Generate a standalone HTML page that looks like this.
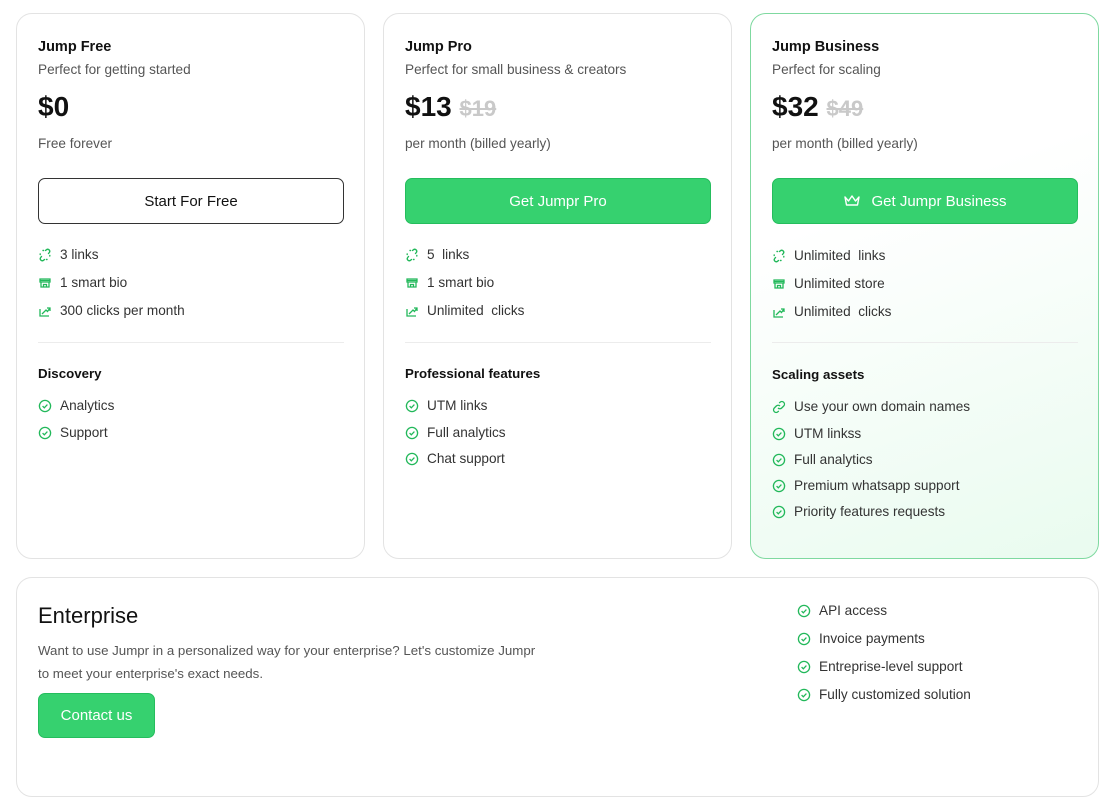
<!DOCTYPE html>
<html><head><meta charset="utf-8"><style>
*{box-sizing:border-box;margin:0;padding:0}
body{width:1108px;height:764px;background:#fff;font-family:"Liberation Sans",sans-serif;color:#1a1a1a;position:relative;overflow:hidden}
.card{position:absolute;top:13px;width:349px;height:546px;border:1px solid #e3e3e3;border-radius:16px;background:#fff}
.card.biz{border-color:#7fd9a0;background:linear-gradient(160deg,#fff 35%,#e9fbef 100%)}
.abs{position:absolute;left:21px;white-space:nowrap}
.t{top:25px;font-size:14.5px;font-weight:bold;color:#111}
.s{top:48px;font-size:13.6px;color:#555}
.p{top:77px;font-size:28px;font-weight:bold;color:#111}
.p del{color:#c9c9c9;font-size:22px;font-weight:bold}
.f{top:122px;font-size:13.6px;color:#555}
.btn{position:absolute;left:21px;top:164px;width:306px;height:46px;border-radius:7px;font-size:15px;display:flex;align-items:center;justify-content:center}
.b1{border:1px solid #333;color:#111;background:#fff}
.bg{background:#36d16f;border:1px solid #25bd5d;color:#fff}
.li{position:absolute;left:21px;font-size:13.6px;color:#333;display:flex;align-items:center;white-space:nowrap}
.li svg{margin-right:8px}
.hr{position:absolute;left:21px;width:306px;top:328px;border-top:1px solid #ececec}
.h{top:352px;font-size:13.3px;font-weight:bold;color:#111}
.ent{position:absolute;left:16px;top:577px;width:1083px;height:220px;border:1px solid #e3e3e3;border-radius:16px}
</style></head><body>
<svg width="0" height="0" style="position:absolute"><defs>
<symbol id="chk" viewBox="0 0 14 14"><circle cx="7" cy="7" r="5.6" fill="none" stroke="#22b85a" stroke-width="1.3"/><path d="M4.6 7.1l1.7 1.7 3.1-3.2" fill="none" stroke="#22b85a" stroke-width="1.3"/></symbol>
<symbol id="lnk" viewBox="0 0 14 14"><g fill="none" stroke="#22b85a" stroke-width="1.4" stroke-linecap="round"><path d="M7.5 2.5l1-.8a2 2 0 012.8 2.8l-.8 1"/><path d="M6.5 11.5l-1 .8a2 2 0 01-2.8-2.8l.8-1"/><path d="M2.2 6.5v-.5M11.8 7.5v.5M5 2.5h.5M9 11.5h-.5"/></g></symbol>
<symbol id="st" viewBox="0 0 14 14"><path d="M2 3h10v3H2zM3 6v5h8V6M2 4.5h10M5.5 11V8.5h3V11" fill="none" stroke="#22b85a" stroke-width="1.3"/></symbol>
<symbol id="tr" viewBox="0 0 14 14"><path d="M2 5v7h9M4 10l4-4 1.5 1.5L12 4M9 4h3v3" fill="none" stroke="#22b85a" stroke-width="1.3"/></symbol>
<symbol id="cl" viewBox="0 0 14 14"><path d="M6 8a2.6 2.6 0 003.7 0l2-2a2.6 2.6 0 00-3.7-3.7l-.8.8M8 6a2.6 2.6 0 00-3.7 0l-2 2a2.6 2.6 0 003.7 3.7l.8-.8" fill="none" stroke="#22b85a" stroke-width="1.3"/></symbol>
</defs></svg>

<div class="card" style="left:16px">
<div class="abs t">Jump Free</div><div class="abs s">Perfect for getting started</div>
<div class="abs p">$0</div><div class="abs f">Free forever</div>
<div class="btn b1">Start For Free</div>
<div class="li" style="top:233px"><svg width="14" height="14"><use href="#lnk"/></svg>3 links</div>
<div class="li" style="top:261px"><svg width="14" height="14"><use href="#st"/></svg>1 smart bio</div>
<div class="li" style="top:289px"><svg width="14" height="14"><use href="#tr"/></svg>300 clicks per month</div>
<div class="hr"></div><div class="abs h">Discovery</div>
<div class="li" style="top:384px"><svg width="14" height="14"><use href="#chk"/></svg>Analytics</div>
<div class="li" style="top:411px"><svg width="14" height="14"><use href="#chk"/></svg>Support</div>
</div>

<div class="card" style="left:383px">
<div class="abs t">Jump Pro</div><div class="abs s">Perfect for small business &amp; creators</div>
<div class="abs p">$13 <del>$19</del></div><div class="abs f">per month (billed yearly)</div>
<div class="btn bg">Get Jumpr Pro</div>
<div class="li" style="top:233px"><svg width="14" height="14"><use href="#lnk"/></svg>5&nbsp; links</div>
<div class="li" style="top:261px"><svg width="14" height="14"><use href="#st"/></svg>1 smart bio</div>
<div class="li" style="top:289px"><svg width="14" height="14"><use href="#tr"/></svg>Unlimited&nbsp; clicks</div>
<div class="hr"></div><div class="abs h">Professional features</div>
<div class="li" style="top:384px"><svg width="14" height="14"><use href="#chk"/></svg>UTM links</div>
<div class="li" style="top:411px"><svg width="14" height="14"><use href="#chk"/></svg>Full analytics</div>
<div class="li" style="top:437px"><svg width="14" height="14"><use href="#chk"/></svg>Chat support</div>
</div>

<div class="card biz" style="left:750px">
<div class="abs t">Jump Business</div><div class="abs s">Perfect for scaling</div>
<div class="abs p">$32 <del>$49</del></div><div class="abs f">per month (billed yearly)</div>
<div class="btn bg"><svg width="18" height="14" viewBox="0 0 18 14" style="margin-right:10px"><path d="M2 3l3.5 4L9 2l3.5 5L16 3l-1.5 8h-11z" fill="none" stroke="#fff" stroke-width="1.4" stroke-linejoin="round"/></svg>Get Jumpr Business</div>
<div class="li" style="top:234px"><svg width="14" height="14"><use href="#lnk"/></svg>Unlimited&nbsp; links</div>
<div class="li" style="top:262px"><svg width="14" height="14"><use href="#st"/></svg>Unlimited store</div>
<div class="li" style="top:290px"><svg width="14" height="14"><use href="#tr"/></svg>Unlimited&nbsp; clicks</div>
<div class="hr"></div><div class="abs h" style="top:353px">Scaling assets</div>
<div class="li" style="top:385px"><svg width="14" height="14"><use href="#cl"/></svg>Use your own domain names</div>
<div class="li" style="top:412px"><svg width="14" height="14"><use href="#chk"/></svg>UTM linkss</div>
<div class="li" style="top:438px"><svg width="14" height="14"><use href="#chk"/></svg>Full analytics</div>
<div class="li" style="top:464px"><svg width="14" height="14"><use href="#chk"/></svg>Premium whatsapp support</div>
<div class="li" style="top:490px"><svg width="14" height="14"><use href="#chk"/></svg>Priority features requests</div>
</div>

<div class="ent">
<div class="abs" style="top:25px;font-size:22px;color:#111">Enterprise</div>
<div class="abs" style="top:61px;font-size:13.3px;color:#555;line-height:23px">Want to use Jumpr in a personalized way for your enterprise? Let's customize Jumpr<br>to meet your enterprise's exact needs.</div>
<div class="btn bg" style="top:115px;width:117px;height:45px">Contact us</div>
<div class="li" style="left:780px;top:25px"><svg width="14" height="14"><use href="#chk"/></svg>API access</div>
<div class="li" style="left:780px;top:53px"><svg width="14" height="14"><use href="#chk"/></svg>Invoice payments</div>
<div class="li" style="left:780px;top:81px"><svg width="14" height="14"><use href="#chk"/></svg>Entreprise-level support</div>
<div class="li" style="left:780px;top:109px"><svg width="14" height="14"><use href="#chk"/></svg>Fully customized solution</div>
</div>
</body></html>
